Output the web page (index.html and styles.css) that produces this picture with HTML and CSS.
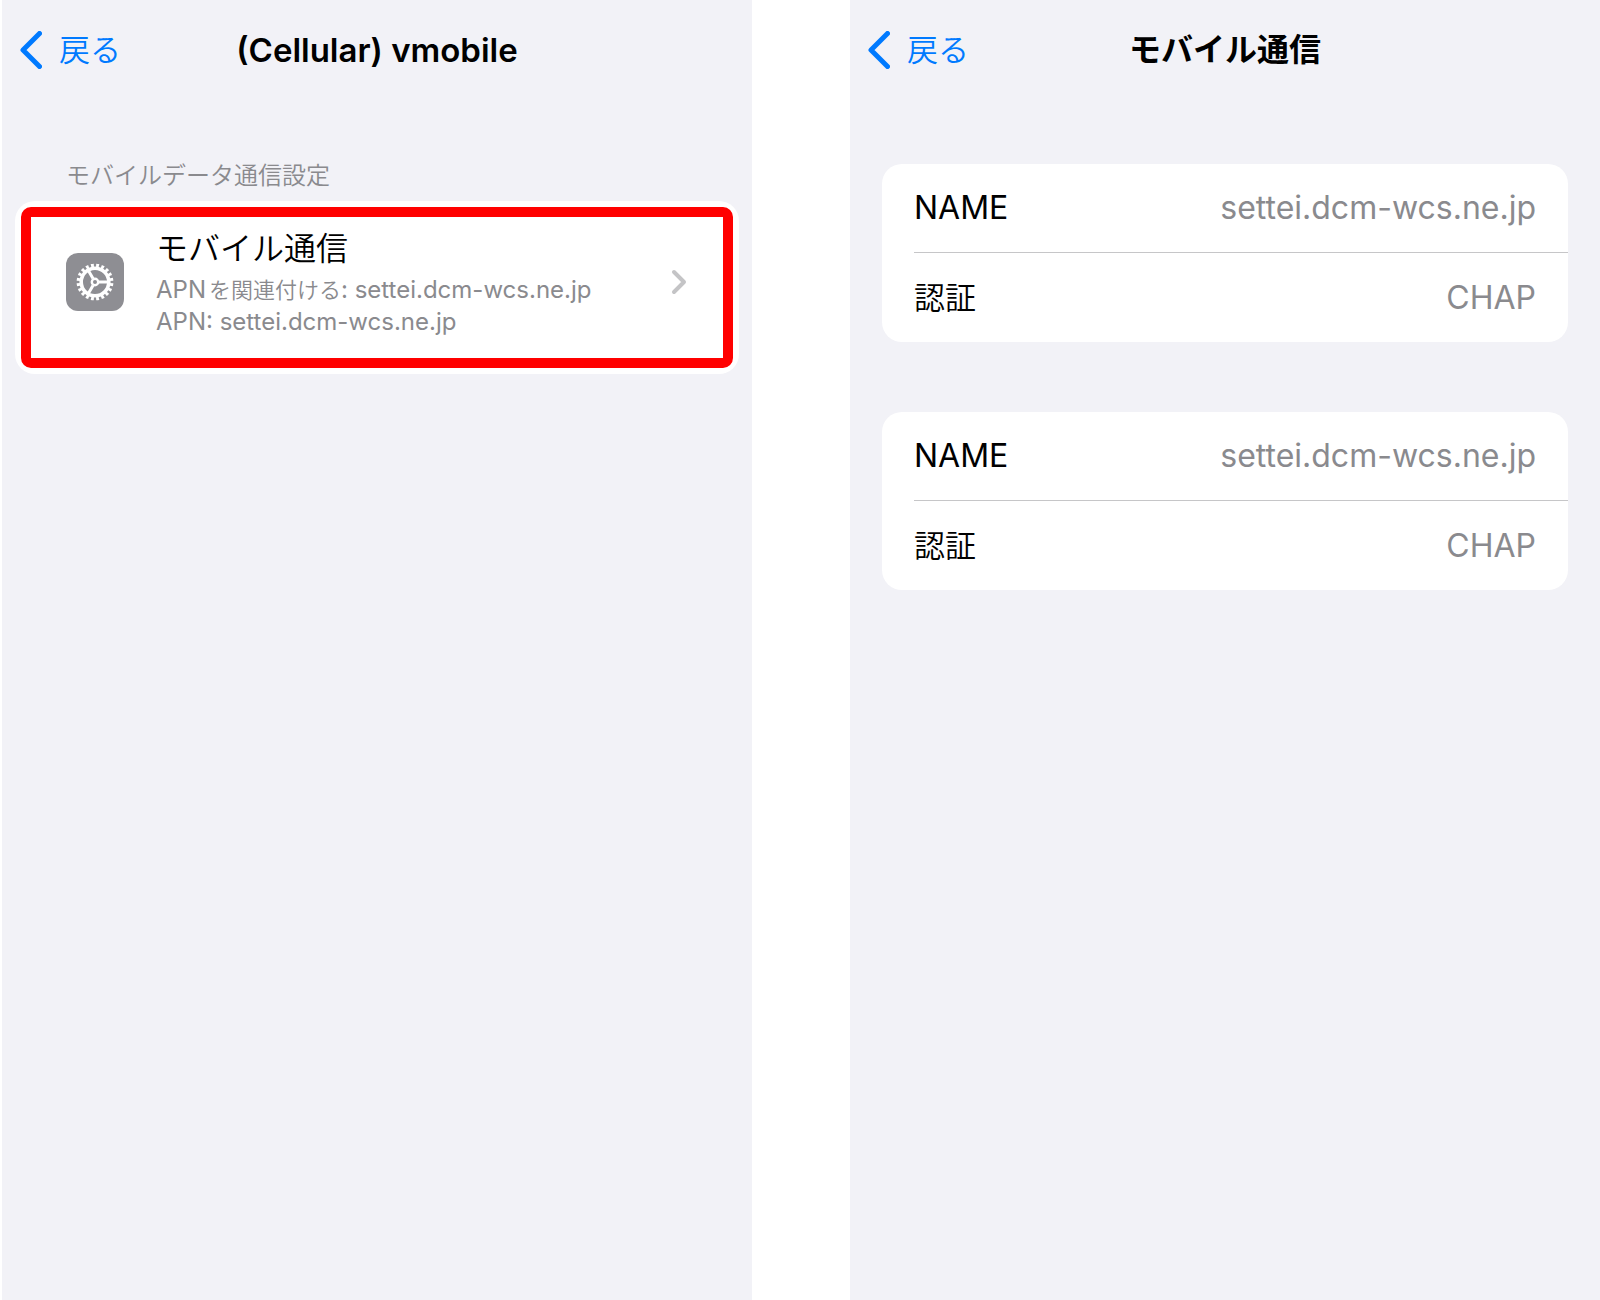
FILE: index.html
```
<!DOCTYPE html>
<html lang="ja">

<head>
  <meta charset="UTF-8">
  <meta name="viewport" content="width=device-width, initial-scale=1.0">
  <title>モバイル通信</title>
  <link rel="stylesheet" href="styles.css">
</head>

<body>
  <main class="screens">
    <section class="screen">
      <header class="navbar">
        <button type="button" class="back">
          <svg class="back-icon" viewBox="0 0 22 38" aria-hidden="true"><path d="M19.5 2.5 3 19l16.5 16.5" /></svg>
          戻る
        </button>
        <h1 class="title title-latin">(Cellular) vmobile</h1>
      </header>

      <h2 class="group-title">モバイルデータ通信設定</h2>
      <div class="highlight">
        <a href="#detail" class="profile">
          <svg class="gear" viewBox="0 0 58 58" aria-hidden="true">
            <rect class="gear-bg" width="58" height="58" rx="12" />
            <circle class="gear-teeth" cx="29" cy="29" r="16.4" pathLength="40" />
            <circle class="gear-ring" cx="29" cy="29" r="13.8" />
            <circle class="gear-hub" cx="29" cy="29" r="3.2" />
            <path class="gear-spokes" d="M33 29h9M27 25.5l-4.8-8.3M27 32.5l-4.8 8.3" />
          </svg>
          <span class="profile-text">
            <span class="profile-name">モバイル通信</span>
            <span class="profile-sub">APN<span class="sub-ja">を関連付ける</span>: settei.dcm-wcs.ne.jp</span>
            <span class="profile-sub">APN: settei.dcm-wcs.ne.jp</span>
          </span>
          <svg class="chevron" viewBox="0 0 16 26" aria-hidden="true"><path d="M3 3l10 10L3 23" /></svg>
        </a>
      </div>
    </section>

    <section class="screen" id="detail">
      <header class="navbar">
        <button type="button" class="back">
          <svg class="back-icon" viewBox="0 0 22 38" aria-hidden="true"><path d="M19.5 2.5 3 19l16.5 16.5" /></svg>
          戻る
        </button>
        <h1 class="title">モバイル通信</h1>
      </header>

      <div class="cards">
        <dl class="card">
          <div class="row">
            <dt class="latin">NAME</dt>
            <dd>settei.dcm-wcs.ne.jp</dd>
          </div>
          <div class="row">
            <dt>認証</dt>
            <dd>CHAP</dd>
          </div>
        </dl>
        <dl class="card">
          <div class="row">
            <dt class="latin">NAME</dt>
            <dd>settei.dcm-wcs.ne.jp</dd>
          </div>
          <div class="row">
            <dt>認証</dt>
            <dd>CHAP</dd>
          </div>
        </dl>
      </div>
    </section>
  </main>
</body>

</html>
```
FILE: styles.css
```
* {
  box-sizing: border-box;
}

body {
  margin: 0;
  background: #fff;
  color: #000;
  font-family: Inter, "Noto Sans CJK JP", sans-serif;
  font-size: 32px;
  line-height: 40px;
}

.screens {
  display: grid;
  grid-template-columns: 1fr 1fr;
  gap: 98px;
  min-height: 100vh;
  padding-left: 2px;
}

.screen {
  background: #f2f2f7;
}

.navbar {
  display: grid;
  grid-template-columns: 1fr auto 1fr;
  align-items: center;
  height: 100px;
  padding: 0 18px;
}

.back {
  display: flex;
  align-items: center;
  gap: 17px;
  padding: 0;
  border: 0;
  background: none;
  color: #007aff;
  font: inherit;
  font-size: 31px;
  font-weight: 350;
  cursor: pointer;
}

.back-icon {
  width: 22px;
  height: 38px;
  fill: none;
  stroke: #007aff;
  stroke-width: 5;
  stroke-linecap: round;
  stroke-linejoin: round;
}

.title {
  margin: 0;
  font-size: 32px;
  font-weight: 700;
}

.title-latin {
  font-size: 33px;
  font-weight: 600;
}

.group-title {
  margin: 60px 64px 9px;
  color: #8a8a8e;
  font-size: 24px;
  font-weight: 350;
  line-height: 32px;
}

/* white band around the red frame */
.highlight {
  margin: 0 13px;
  padding: 6px;
  border-radius: 20px;
  background: #fff;
}

.profile {
  display: flex;
  align-items: center;
  gap: 32px;
  height: 161px;
  padding: 0 36px 12px 35px;
  border: 10px solid #f00;
  border-radius: 10px;
  color: inherit;
  text-decoration: none;
}

.gear {
  flex: none;
  width: 58px;
  height: 58px;
}

.gear-bg {
  fill: #8e8e93;
}

.gear-teeth,
.gear-ring,
.gear-hub,
.gear-spokes {
  fill: none;
  stroke: #fff;
  stroke-width: 3;
}

.gear-teeth {
  stroke-width: 4;
  stroke-dasharray: 1.1 0.9;
  stroke-dashoffset: -0.45;
}

.gear-ring {
  stroke-width: 3.6;
}

.gear-hub {
  stroke-width: 2.4;
}

.profile-text {
  flex: 1;
  padding-top: 3px;
}

.profile-name,
.profile-sub {
  display: block;
}

.profile-name {
  margin-bottom: 5px;
  font-weight: 350;
}

.profile-sub {
  color: #8a8a8e;
  font-size: 24px;
  line-height: 32px;
}

.sub-ja {
  margin-left: 3px;
  font-size: 22px;
  font-weight: 350;
}

.chevron {
  width: 16px;
  height: 26px;
  fill: none;
  stroke: #c4c4c6;
  stroke-width: 4;
  stroke-linecap: round;
  stroke-linejoin: round;
}

.cards {
  display: grid;
  gap: 70px;
  padding: 64px 32px;
}

.card {
  margin: 0;
  padding-left: 32px;
  border-radius: 20px;
  background: #fff;
}

.row {
  display: flex;
  align-items: center;
  justify-content: space-between;
  height: 89px;
  padding-right: 32px;
}

.row:first-child {
  border-bottom: 1px solid #c6c6c8;
}

.row dt {
  font-size: 31px;
  font-weight: 350;
}

.row dt.latin {
  font-size: 32px;
  font-weight: 400;
}

.row dd {
  margin: 0;
  color: #8a8a8e;
}
```
